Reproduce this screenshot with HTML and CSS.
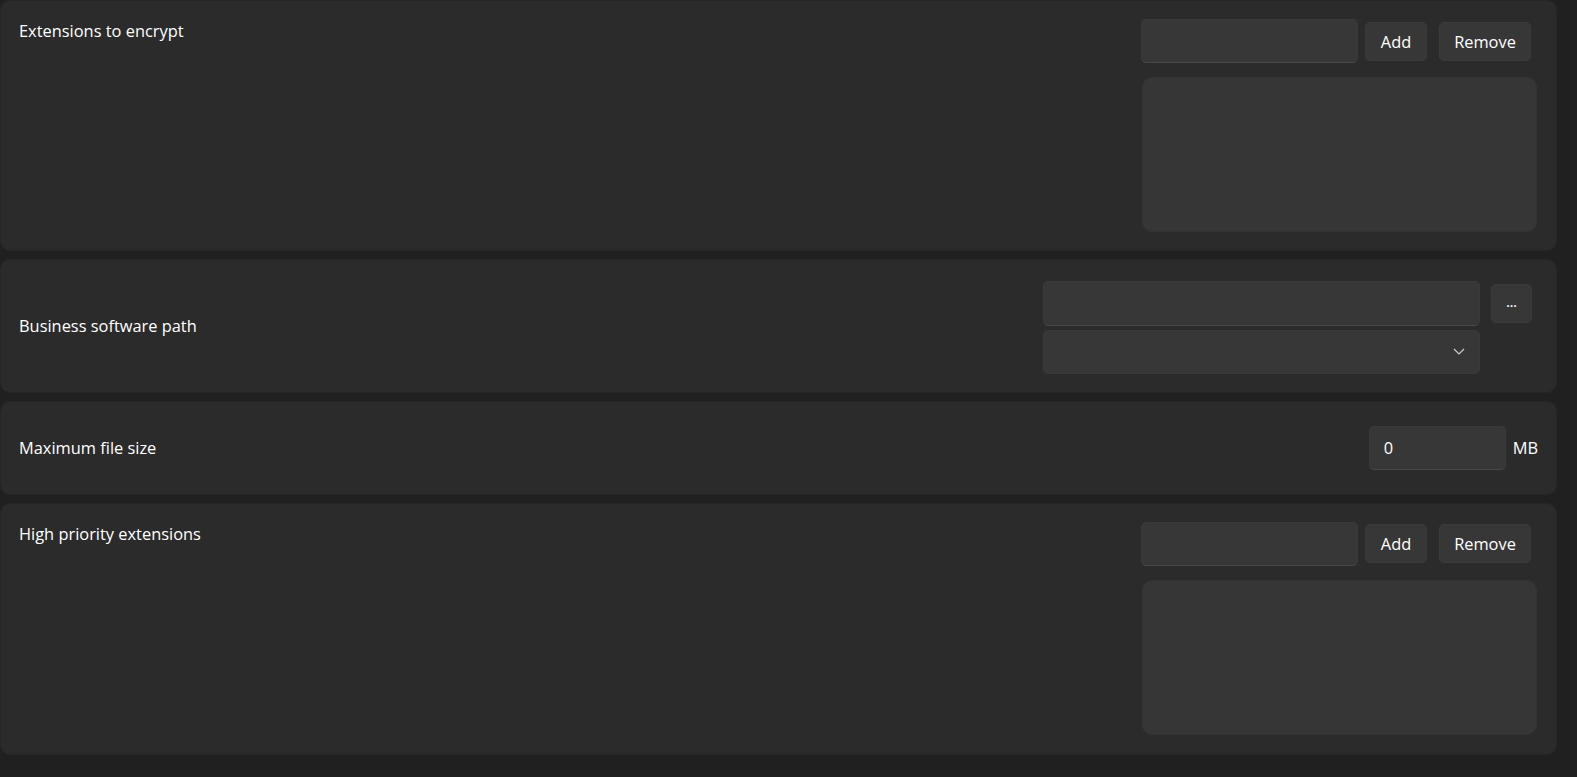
FILE: index.html
```html
<!DOCTYPE html>
<html lang="en">
<head>
<meta charset="utf-8">
<title>Settings</title>
<link rel="stylesheet" href="styles.css">
</head>
<body>
<main class="page">
  <section class="card card-list">
    <div class="label">Extensions to encrypt</div>
    <div class="list-editor">
      <div class="list-row">
        <div class="textbox ext-input"></div>
        <button class="btn btn-add">Add</button>
        <button class="btn btn-remove">Remove</button>
      </div>
      <div class="listbox"></div>
    </div>
  </section>

  <section class="card card-path">
    <div class="label label-center">Business software path</div>
    <div class="path-editor">
      <div class="path-fields">
        <div class="textbox path-input"></div>
        <div class="combo">
          <svg class="chevron" width="12" height="7" viewBox="0 0 12 7"><path d="M1 1 L6 6 L11 1" fill="none" stroke="#d0d0d0" stroke-width="1.1"/></svg>
        </div>
      </div>
      <button class="btn btn-browse">...</button>
    </div>
  </section>

  <section class="card card-size">
    <div class="label">Maximum file size</div>
    <div class="size-editor">
      <div class="textbox number-input">0</div>
      <span class="unit">MB</span>
    </div>
  </section>

  <section class="card card-list card-last">
    <div class="label">High priority extensions</div>
    <div class="list-editor">
      <div class="list-row">
        <div class="textbox ext-input"></div>
        <button class="btn btn-add">Add</button>
        <button class="btn btn-remove">Remove</button>
      </div>
      <div class="listbox"></div>
    </div>
  </section>
</main>
</body>
</html>
```

FILE: styles.css
```css
html, body {
  margin: 0;
  padding: 0;
  background: #202020;
  height: 100%;
  overflow: hidden;
}

body {
  font-family: "Open Sans", "Noto Sans", sans-serif;
  font-size: 16.4px;
  color: #ffffff;
}

.page {
  width: 1557px;
  display: flex;
  flex-direction: column;
  gap: 7.5px;
}

.card {
  box-sizing: border-box;
  background: #2b2b2b;
  border: 1px solid #262626;
  border-radius: 10px;
  display: flex;
  justify-content: space-between;
}

.label {
  line-height: 24px;
  white-space: nowrap;
}

/* list cards */
.card-list {
  height: 251px;
  align-items: flex-start;
  padding: 18px 19px 0 18px;
}

.card-last {
  height: 252px;
}

.list-editor {
  width: 395px;
  display: flex;
  flex-direction: column;
  gap: 14px;
}

.list-row {
  display: flex;
  align-items: center;
  height: 44px;
}

.textbox {
  box-sizing: border-box;
  background: #373737;
  border: 1px solid #3a3a3a;
  border-bottom-color: #484848;
  border-radius: 5px;
  height: 44px;
}

.ext-input {
  width: 217px;
  margin-left: -1px;
}

.btn {
  box-sizing: border-box;
  height: 39px;
  background: #373737;
  border: 1px solid #3b3b3b;
  border-radius: 5px;
  color: #ffffff;
  font-family: inherit;
  font-size: 16.4px;
  padding: 0;
  display: flex;
  align-items: center;
  justify-content: center;
}

.btn-add {
  width: 62px;
  margin-left: 7px;
}

.btn-remove {
  width: 92px;
  margin-left: 12px;
}

.listbox {
  box-sizing: border-box;
  height: 155px;
  background: #363636;
  border: 1px solid #333333;
  border-radius: 10px;
}

/* path card */
.card-path {
  height: 134.5px;
  align-items: flex-start;
  padding: 21px 24px 0 18px;
}

.label-center {
  align-self: center;
  margin-top: -21px;
}

.path-editor {
  display: flex;
  align-items: flex-start;
  gap: 11px;
}

.path-fields {
  display: flex;
  flex-direction: column;
  gap: 4px;
}

.path-input {
  width: 437px;
  height: 45px;
}

.combo {
  box-sizing: border-box;
  width: 437px;
  height: 44px;
  background: #373737;
  border: 1px solid #3a3a3a;
  border-radius: 5px;
  display: flex;
  align-items: center;
  justify-content: flex-end;
  padding-right: 14px;
}

.chevron {
  display: block;
}

.btn-browse {
  width: 41px;
  margin-top: 3px;
  font-size: 13px;
  font-weight: 600;
  letter-spacing: 0;
  padding-bottom: 2px;
}

/* size card */
.card-size {
  height: 94.5px;
  align-items: center;
  padding: 0 18px 0 18px;
}

.size-editor {
  display: flex;
  align-items: center;
  gap: 7px;
}

.number-input {
  width: 137px;
  height: 43.5px;
  padding-left: 14px;
  display: flex;
  align-items: center;
  line-height: 24px;
}

.unit {
  line-height: 24px;
}
```
